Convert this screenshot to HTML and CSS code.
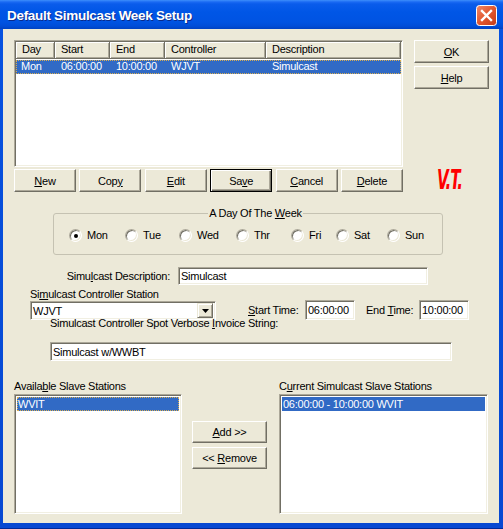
FILE: index.html
```html
<!DOCTYPE html>
<html>
<head>
<meta charset="utf-8">
<link rel="stylesheet" href="styles.css">
</head>
<body>
<div class="win">
  <div class="titlebar">
    <span class="title">Default Simulcast Week Setup</span>
    <div class="close">
      <svg width="21" height="21" viewBox="0 0 21 21">
        <defs>
          <linearGradient id="cg" x1="0" y1="0" x2="1" y2="1">
            <stop offset="0" stop-color="#f08a6a"/>
            <stop offset="0.5" stop-color="#e2572f"/>
            <stop offset="1" stop-color="#c33a17"/>
          </linearGradient>
        </defs>
        <rect x="0.5" y="0.5" width="20" height="20" rx="3" ry="3" fill="url(#cg)" stroke="#fff" stroke-width="1"/>
        <path d="M6 6 L15 15 M15 6 L6 15" stroke="#fff" stroke-width="2.4" stroke-linecap="square"/>
      </svg>
    </div>
  </div>
  <div class="frame">
    <div class="client">
      <div class="top">
        <div class="leftcol">
          <div class="listview sunken">
            <div class="lv-head">
              <div class="hc c-day">Day</div>
              <div class="hc c-start">Start</div>
              <div class="hc c-end">End</div>
              <div class="hc c-ctrl">Controller</div>
              <div class="hc c-desc">Description</div>
            </div>
            <div class="lv-row sel focus">
              <span class="rc c-day">Mon</span>
              <span class="rc c-start">06:00:00</span>
              <span class="rc c-end">10:00:00</span>
              <span class="rc c-ctrl">WJVT</span>
              <span class="rc c-desc">Simulcast</span>
            </div>
          </div>
          <div class="btnrow">
            <div class="btn wide"><span><u>N</u>ew</span></div>
            <div class="btn wide"><span>Cop<u>y</u></span></div>
            <div class="btn wide"><span><u>E</u>dit</span></div>
            <div class="btn wide default"><span>Sa<u>v</u>e</span></div>
            <div class="btn wide"><span><u>C</u>ancel</span></div>
            <div class="btn wide"><span><u>D</u>elete</span></div>
          </div>
        </div>
        <div class="rightcol">
          <div class="btn side"><span><u>O</u>K</span></div>
          <div class="btn side"><span><u>H</u>elp</span></div>
          <div class="logo"><span class="logo-text">V.T.</span></div>
        </div>
      </div>

      <fieldset class="days">
        <legend>A Day Of The <u>W</u>eek</legend>
        <div class="radios">
          <div class="ropt"><span class="radio"><span class="dot"></span></span><span>Mon</span></div>
          <div class="ropt"><span class="radio"></span><span>Tue</span></div>
          <div class="ropt"><span class="radio"></span><span>Wed</span></div>
          <div class="ropt"><span class="radio"></span><span>Thr</span></div>
          <div class="ropt"><span class="radio"></span><span>Fri</span></div>
          <div class="ropt"><span class="radio"></span><span>Sat</span></div>
          <div class="ropt"><span class="radio"></span><span>Sun</span></div>
        </div>
      </fieldset>

      <div class="descrow">
        <div class="desc-lbl">Simu<u>l</u>cast Description:</div>
        <div class="edit sunken desc-in"><span>Simulcast</span></div>
      </div>

      <div class="lbl ctrl-lbl">Si<u>m</u>ulcast Controller Station</div>
      <div class="ctrlrow">
        <div class="combo sunken">
          <span class="combo-text">WJVT</span>
          <span class="ddbtn">
            <svg width="7" height="4" viewBox="0 0 7 4"><path d="M0 0 H7 L3.5 4 Z" fill="#000"/></svg>
          </span>
        </div>
        <div class="start-lbl"><u>S</u>tart Time:</div>
        <div class="edit sunken time-in"><span>06:00:00</span></div>
        <div class="end-lbl">End <u>T</u>ime:</div>
        <div class="edit sunken time-in"><span>10:00:00</span></div>
      </div>

      <div class="lbl verb-lbl">Simulcast Controller Spot Verbose <u>I</u>nvoice String:</div>
      <div class="edit sunken verb-in"><span>Simulcast w/WWBT</span></div>

      <div class="bottom">
        <div class="avail">
          <div class="lbl">Availa<u>b</u>le Slave Stations</div>
          <div class="listbox sunken avail-list">
            <div class="lb-row sel focus">WVIT</div>
          </div>
        </div>
        <div class="mid">
          <div class="btn side"><span><u>A</u>dd &gt;&gt;</span></div>
          <div class="btn side"><span>&lt;&lt; <u>R</u>emove</span></div>
        </div>
        <div class="current">
          <div class="lbl">C<u>u</u>rrent Simulcast Slave Stations</div>
          <div class="listbox sunken cur-list">
            <div class="lb-row sel">06:00:00 - 10:00:00 WVIT</div>
          </div>
        </div>
      </div>
    </div>
  </div>
</div>
</body>
</html>
```

FILE: styles.css
```css
* { box-sizing: border-box; }
html, body { margin: 0; padding: 0; }
body {
  width: 503px;
  height: 529px;
  overflow: hidden;
  font-family: "Liberation Sans", Arial, sans-serif;
  font-size: 11px;
  letter-spacing: -0.25px;
  color: #000;
  background: #0a48d8;
}
u { text-decoration: underline; text-underline-offset: 1px; }

.win {
  width: 503px;
  height: 529px;
  display: flex;
  flex-direction: column;
}

.titlebar {
  height: 29px;
  flex: none;
  display: flex;
  align-items: center;
  justify-content: space-between;
  padding: 0 6px 0 7px;
  background: linear-gradient(to bottom, #3d8ffb 0px, #1a6af3 2px, #0a5ceb 4px, #0056e6 12px, #0053e2 22px, #004dd8 26px, #0042c2 29px);
}
.title {
  color: #fff;
  font-family: "Liberation Sans", Arial, sans-serif;
  font-weight: bold;
  font-size: 13.5px;
  letter-spacing: -0.3px;
  text-shadow: 1px 1px 0 #0a2a8a;
  padding-top: 1px;
}
.close { width: 21px; height: 21px; display: flex; margin-top: 2px; }

.frame {
  flex: 1;
  padding: 0 4px 5px 3px;
  background: linear-gradient(to bottom, #0752e0, #0748d2);
  border-bottom: 1px solid #00299a;
}
.client {
  height: 100%;
  background: #ece9d8;
  padding: 11px 0 0 11px;
}

.sunken {
  background: #fff;
  border: 1px solid;
  border-color: #aca899 #fff #fff #aca899;
  box-shadow: inset 1px 1px 0 #716f64, inset -1px -1px 0 #f1efe2;
}

/* top section */
.top { display: flex; }
.leftcol { width: 389px; display: flex; flex-direction: column; }
.listview { height: 127px; padding: 1px; }
.lv-head { display: flex; height: 17px; }
.hc {
  height: 17px;
  line-height: 15px;
  padding-left: 6px;
  background: #ece9d8;
  border-right: 1px solid #716f64;
  border-bottom: 1px solid #716f64;
  box-shadow: inset 1px 1px 0 #fff, inset -1px -1px 0 #aca899;
  white-space: nowrap;
  overflow: hidden;
}
.c-day { width: 39px; }
.c-start { width: 55px; }
.c-end { width: 55px; }
.c-ctrl { width: 101px; }
.c-desc { width: 135px; }

.lv-row { display: flex; height: 14px; margin-top: 1px; line-height: 13px; }
.rc { padding-left: 6px; white-space: nowrap; }
.lv-row .c-day { padding-left: 5px; }
.sel { background: #316ac5; color: #fff; }
.focus { outline: 1px dotted #d8ad52; outline-offset: -1px; }

.btnrow { display: flex; justify-content: space-between; margin-top: 2px; }

.btn {
  height: 23px;
  display: flex;
  align-items: center;
  justify-content: center;
  background: #ece9d8;
  border: 1px solid;
  border-color: #fff #716f64 #716f64 #fff;
  box-shadow: inset -1px -1px 0 #aca899;
  white-space: nowrap;
}
.btn.wide { width: 62px; }
.btn.side { width: 75px; }
.btn.default {
  border-color: #000;
  box-shadow: inset 1px 1px 0 #fff, inset -1px -1px 0 #716f64, inset -2px -2px 0 #aca899;
}

.rightcol {
  margin-left: 11px;
  width: 75px;
  display: flex;
  flex-direction: column;
  gap: 3px;
}
.logo {
  margin-top: 76px;
  display: flex;
  justify-content: center;
  padding-right: 4px;
}
.logo-text {
  display: inline-block;
  color: #f00;
  font-family: "DejaVu Sans", sans-serif;
  font-weight: bold;
  font-style: italic;
  font-size: 26px;
  line-height: 24px;
  letter-spacing: -1.5px;
  transform: scaleX(0.58);
}

/* day group */
.days {
  margin: 15px 0 0 39px;
  width: 390px;
  padding: 9px 0 12px 15px;
  border: 1px solid #c5c2b2;
  border-radius: 3px;
  min-inline-size: 0;
}
.days legend {
  margin: 0 auto;
  padding: 0 1px;
  line-height: 13px;
}
.radios {
  display: grid;
  grid-template-columns: 56px 54px 57px 55px 45px 51px auto;
  height: 13px;
}
.ropt { display: flex; align-items: center; gap: 5px; line-height: 13px; }
.radio {
  width: 13px;
  height: 13px;
  border-radius: 50%;
  background: #fff;
  border: 1px solid;
  border-color: #aca899 #fff #fff #aca899;
  box-shadow: inset 1px 1px 0 #716f64, inset -1px -1px 0 #ece9d8;
  display: flex;
  align-items: center;
  justify-content: center;
}
.dot { width: 4px; height: 4px; border-radius: 50%; background: #000; }

/* fields */
.edit { padding-left: 2px; white-space: nowrap; display: flex; align-items: center; }
.descrow { display: flex; align-items: center; margin: 12px 0 0 -11px; }
.desc-lbl { width: 167px; text-align: right; }
.desc-in { width: 250px; height: 18px; margin-left: 8px; }

.lbl { line-height: 13px; white-space: nowrap; }
.ctrl-lbl { margin: 3px 0 0 16px; }
.ctrlrow { display: flex; align-items: flex-start; margin-left: 16px; height: 20px; margin-top: -1px; }
.combo { width: 186px; height: 19px; display: flex; align-items: center; justify-content: space-between; padding: 1px 2px 1px 2px; margin-top: 1px; }
.ddbtn {
  width: 16px;
  height: 15px;
  background: #ece9d8;
  border: 1px solid;
  border-color: #ece9d8 #716f64 #716f64 #ece9d8;
  box-shadow: inset 1px 1px 0 #fff, inset -1px -1px 0 #aca899;
  display: flex;
  align-items: center;
  justify-content: center;
}
.start-lbl { width: 57px; margin-left: 32px; line-height: 20px; }
.end-lbl { width: 53px; margin-left: 11px; line-height: 20px; }
.time-in { width: 50px; height: 20px; }

.verb-lbl { margin: -3px 0 0 36px; }
.verb-in { margin: 12px 0 0 36px; width: 402px; height: 19px; }

/* bottom */
.bottom { display: flex; margin-top: 19px; }
.avail { width: 168px; }
.listbox { height: 120px; margin-top: 1px; padding: 2px 2px; }
.lb-row { height: 14px; line-height: 14px; padding-left: 1px; white-space: nowrap; }
.mid { margin-left: 10px; padding-top: 41px; display: flex; flex-direction: column; gap: 4px; }
.mid .btn { height: 22px; }
.current { margin-left: 12px; width: 209px; }
```
